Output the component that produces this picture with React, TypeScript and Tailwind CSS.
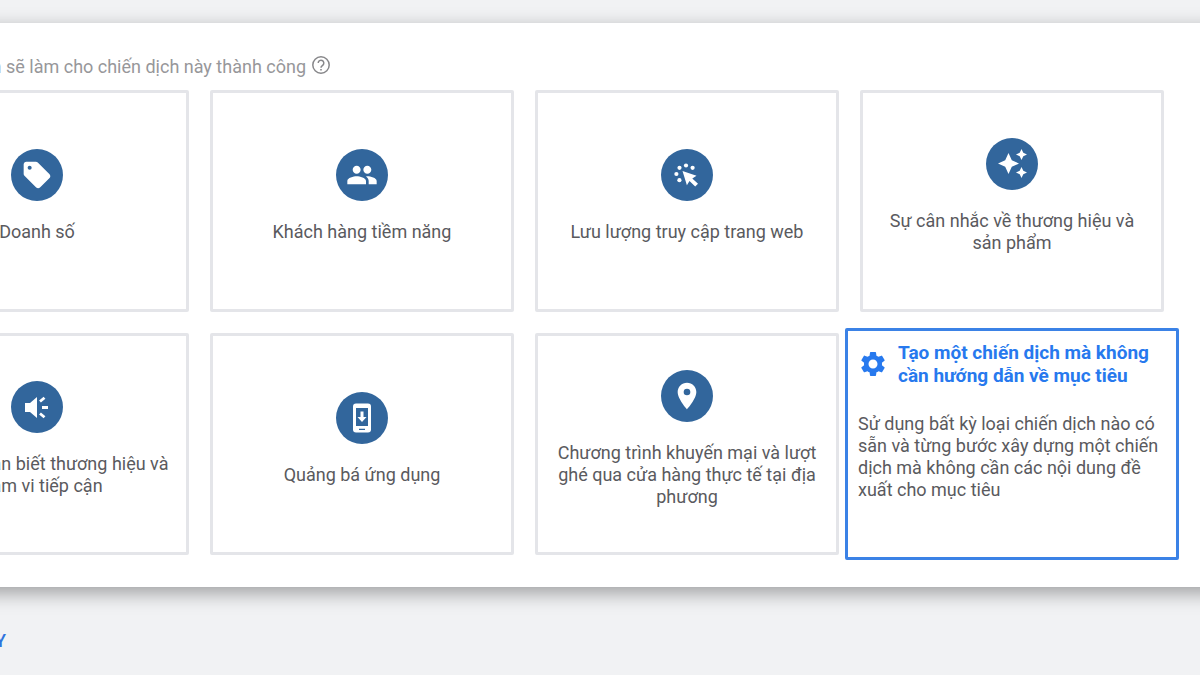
import type { ReactNode } from "react";
import { MdPeople, MdPlace, MdSell, MdSettings } from "react-icons/md";

function HelpIcon() {
  return (
    <svg viewBox="0 0 22 22" width={22} height={22} fill="none">
      <circle cx="11" cy="11" r="8.2" stroke="currentColor" strokeWidth="1.5" />
      <path
        d="M8.200 9a2.800 2.800 0 1 1 4.700 2.100c-1 .9-1.900 1.300-1.900 2.700"
        stroke="currentColor"
        strokeWidth="1.5"
      />
      <path d="M10.200 14.900h1.600v1.600h-1.600z" fill="currentColor" />
    </svg>
  );
}

function ClickIcon() {
  return (
    <svg viewBox="0 0 32 32" width={32} height={32} fill="currentColor">
      <circle cx="15" cy="6.5" r="2.1" />
      <circle cx="8.5" cy="8.8" r="2.1" />
      <circle cx="21.6" cy="8.8" r="2.1" />
      <circle cx="5.4" cy="15" r="2.1" />
      <circle cx="8.4" cy="21.2" r="2.1" />
      <path d="M11.500 12l14 4.800-4.200 2.600 5.700 5.400-2.800 2.800-5.700-5.600-2.600 4.200z" />
    </svg>
  );
}

function SparklesIcon() {
  return (
    <svg viewBox="0 0 32 32" width={32} height={32} fill="currentColor">
      <path d="M12.500 5l3.300 7.200 7.200 3.300-7.200 3.300-3.300 7.200-3.300-7.200L2 15.500l7.200-3.300z" />
      <path d="M25.500 1l1.800 3.700L31 6.500l-3.700 1.800-1.800 3.700-1.800-3.700L20 6.500l3.700-1.800z" />
      <path d="M25.500 19l1.800 3.700 3.700 1.800-3.700 1.800-1.800 3.700-1.800-3.700-3.700-1.800 3.700-1.800z" />
    </svg>
  );
}

function MegaphoneIcon() {
  return (
    <svg viewBox="0 0 32 32" width={32} height={32} fill="currentColor">
      <path d="M4 12h5l7-6v21l-7-6H4z" />
      <path
        d="M19 10.500l4.500-3.800M21 16.500h6M19 22.500l4.500 3.800"
        fill="none"
        stroke="currentColor"
        strokeWidth="2.8"
      />
    </svg>
  );
}

function PhoneIcon() {
  return (
    <svg viewBox="0 0 32 32" width={32} height={32}>
      <rect x="7" y="1.5" width="18" height="29" rx="3" fill="currentColor" />
      <path d="M10 6h12v18H10zM13 26.8h6v1.2h-6z" fill="#32669c" />
      <path d="M14.5 9.500h3v5.500h3L16 20l-4.500-5h3z" fill="currentColor" />
    </svg>
  );
}

const goals: { label: string; icon: ReactNode }[] = [
  { label: "Doanh số", icon: <MdSell size={32} /> },
  { label: "Khách hàng tiềm năng", icon: <MdPeople size={32} /> },
  { label: "Lưu lượng truy cập trang web", icon: <ClickIcon /> },
  { label: "Sự cân nhắc về thương hiệu và sản phẩm", icon: <SparklesIcon /> },
  {
    label: "Mức độ nhận biết thương hiệu và phạm vi tiếp cận",
    icon: <MegaphoneIcon />,
  },
  { label: "Quảng bá ứng dụng", icon: <PhoneIcon /> },
  {
    label: "Chương trình khuyến mại và lượt ghé qua cửa hàng thực tế tại địa phương",
    icon: <MdPlace size={32} />,
  },
];

function GoalCard({ label, icon }: { label: string; icon: ReactNode }) {
  return (
    <button className="flex flex-col items-center justify-center gap-5 px-4 pb-[10px] bg-white border-[3px] border-[#e4e5e9] rounded-xs">
      <span className="flex items-center justify-center w-[52px] h-[52px] text-white rounded-full bg-[#32669c]">
        {icon}
      </span>
      <span>{label}</span>
    </button>
  );
}

export default function App() {
  return (
    <div className="min-h-screen overflow-hidden bg-[#f1f2f4] pt-[23px] font-[Roboto,sans-serif] text-[18px] leading-[22px] text-[#5a5a5e]">
      <main className="-mx-8 px-8 bg-white pt-[31px] pb-8 shadow-[0_6px_18px_rgba(0,0,0,0.35)]">
        <div className="flex items-start justify-end w-[332px] gap-1 pb-3 text-[#97979a] whitespace-nowrap">
          <span className="pt-[2px]">
            bạn sẽ làm cho chiến dịch này thành công
          </span>
          <button aria-label="Trợ giúp" className="text-[#88888b]">
            <HelpIcon />
          </button>
        </div>
        <div className="grid grid-cols-4 auto-rows-[222px] gap-[21px] -ml-[115px] mr-9">
          {goals.map((goal) => (
            <GoalCard key={goal.label} {...goal} />
          ))}
          <button className="relative flex flex-col gap-[26px] -mx-[15px] -my-[5px] pt-[10px] px-[10px] text-left bg-white border-[3px] border-[#3b82e6] rounded-xs">
            <span className="flex items-center gap-[10px] text-[19px] font-bold leading-[23px] text-[#2779ee]">
              <MdSettings size={30} className="shrink-0" />
              Tạo một chiến dịch mà không cần hướng dẫn về mục tiêu
            </span>
            <span>
              Sử dụng bất kỳ loại chiến dịch nào có sẵn và từng bước xây dựng
              một chiến dịch mà không cần các nội dung đề xuất cho mục tiêu
            </span>
          </button>
        </div>
      </main>
      <footer className="flex justify-end w-[6px] pt-[43px] pb-6">
        <a href="#" className="font-medium text-[#2f74dd]">
          HỦY
        </a>
      </footer>
    </div>
  );
}
